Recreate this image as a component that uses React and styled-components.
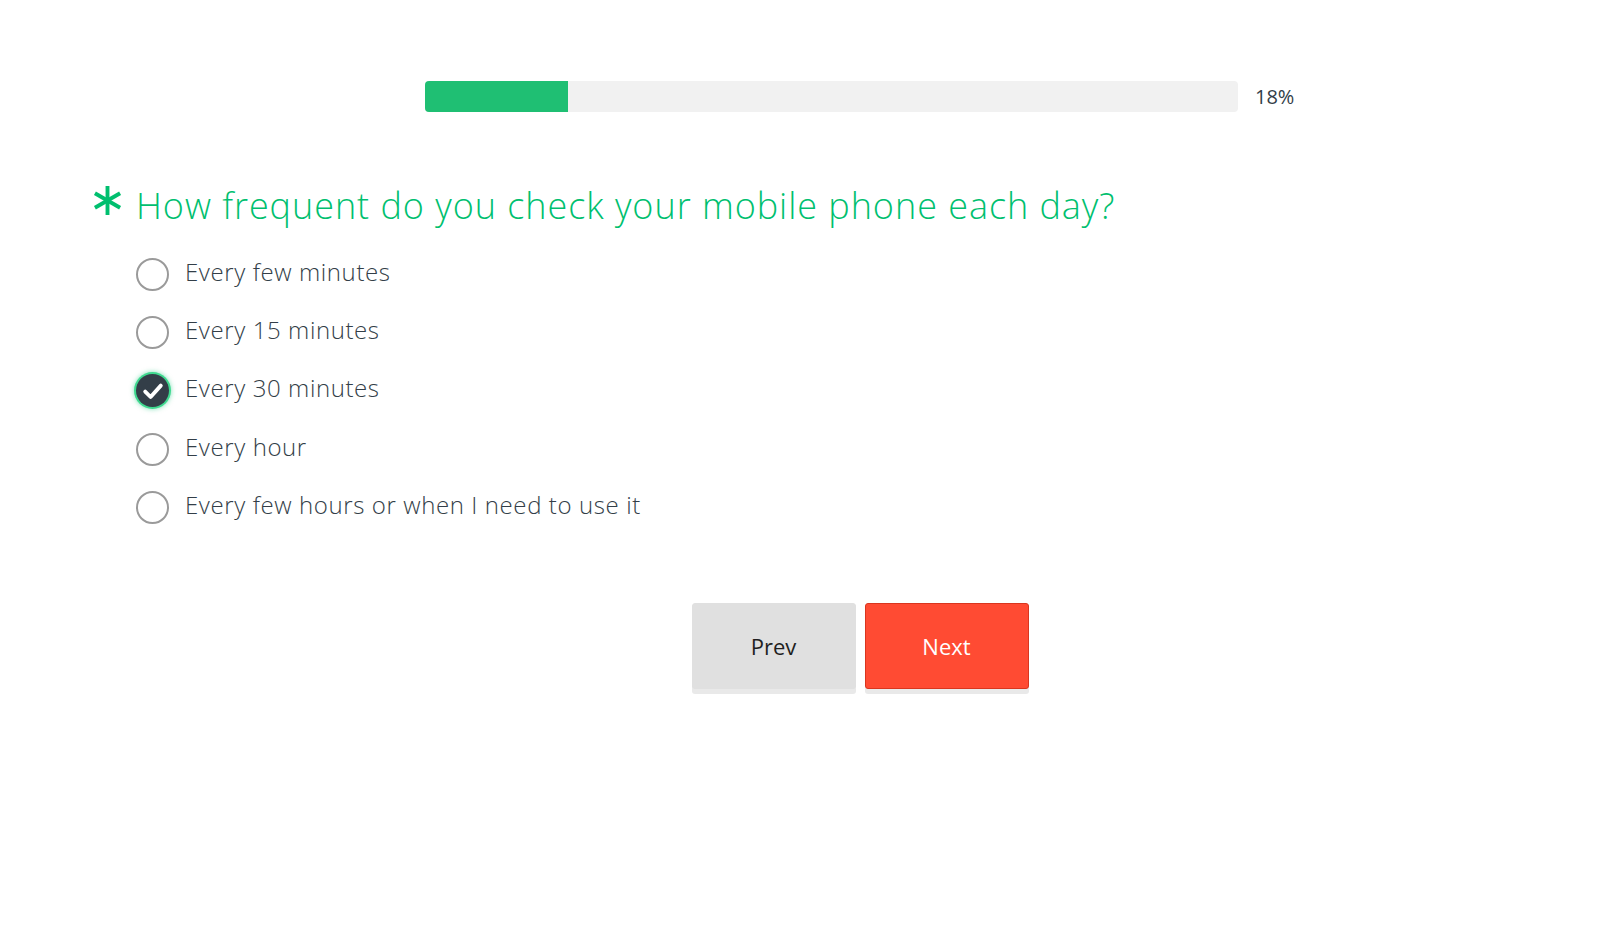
import React from "react";
import styled, { createGlobalStyle } from "styled-components";

const GlobalStyle = createGlobalStyle`
  body {
    margin: 0;
    background: #fff;
    font-family: "Open Sans", "Liberation Sans", sans-serif;
    color: #333e48;
  }
`;

const Page = styled.div`
  width: 1600px;
  min-height: 926px;
  padding-top: 81px;
  box-sizing: border-box;
`;

const Centered = styled.div`
  display: flex;
  justify-content: center;
  padding-left: 120px;
`;

const ProgressRow = styled(Centered)`
  align-items: center;
  gap: 17px;
`;

const Track = styled.div`
  width: 813px;
  height: 31px;
  background: #f1f1f1;
  border-radius: 4px;
  overflow: hidden;
`;

const Fill = styled.div`
  height: 100%;
  background: #1fbf73;
`;

const Percent = styled.span`
  font-size: 20px;
  color: #333e48;
  width: 40px;
`;

const Question = styled.div`
  display: flex;
  align-items: center;
  gap: 13px;
  padding-left: 92px;
  margin-top: 70px;
  height: 48px;
`;

const Asterisk = styled.svg`
  width: 31px;
  height: 31px;
  margin-top: -12px;
  flex-shrink: 0;
`;

const QuestionText = styled.h2`
  margin: 0;
  font-size: 36px;
  font-weight: 300;
  letter-spacing: 0.95px;
  line-height: 48px;
  color: #00bf6f;
`;

const Options = styled.div`
  display: flex;
  flex-direction: column;
  padding-left: 136px;
  margin-top: 15px;
`;

const Option = styled.label`
  display: flex;
  align-items: center;
  gap: 16px;
  height: 58.4px;
  cursor: pointer;
`;

const Radio = styled.span`
  width: 33px;
  height: 33px;
  box-sizing: border-box;
  border-radius: 50%;
  border: ${(p) => (p.$checked ? "none" : "2px solid #9a9a9a")};
  background: ${(p) => (p.$checked ? "#333e48" : "#fff")};
  box-shadow: ${(p) => (p.$checked ? "0 0 0 2px #3fd98f, 0 0 5px 2px rgba(0,191,111,0.5)" : "none")};
  display: flex;
  align-items: center;
  justify-content: center;
  flex-shrink: 0;
`;

const OptionText = styled.span`
  font-size: 24px;
  font-weight: 300;
  letter-spacing: 0.6px;
  margin-bottom: 6px;
  color: #333e48;
`;

const Buttons = styled(Centered)`
  gap: 9px;
  margin-top: 66px;
`;

const Button = styled.button`
  width: 164px;
  height: 86px;
  border-radius: 3px;
  font-family: "Open Sans", "Liberation Sans", sans-serif;
  font-size: 22px;
  cursor: pointer;
  background: ${(p) => (p.$primary ? "#ff4b33" : "#e0e0e0")};
  color: ${(p) => (p.$primary ? "#fff" : "#1f1f1f")};
  border: 1px solid ${(p) => (p.$primary ? "#d9361f" : "#e0e0e0")};
  box-shadow: 0 5px 0 #e9e9e9;
`;

const options = [
  "Every few minutes",
  "Every 15 minutes",
  "Every 30 minutes",
  "Every hour",
  "Every few hours or when I need to use it",
];

export default function App() {
  const [selected, setSelected] = React.useState(2);
  const progress = 17.6;

  return (
    <Page>
      <GlobalStyle />
      <ProgressRow>
        <Track>
          <Fill style={{ width: `${progress}%` }} />
        </Track>
        <Percent>18%</Percent>
      </ProgressRow>

      <Question>
        <Asterisk viewBox="0 0 32 32">
          <g stroke="#00bf6f" strokeWidth="4" strokeLinecap="butt">
            <line x1="16" y1="1" x2="16" y2="31" />
            <line x1="3" y1="8.5" x2="29" y2="23.5" />
            <line x1="3" y1="23.5" x2="29" y2="8.5" />
          </g>
        </Asterisk>
        <QuestionText>How frequent do you check your mobile phone each day?</QuestionText>
      </Question>

      <Options>
        {options.map((o, i) => (
          <Option key={o} onClick={() => setSelected(i)}>
            <Radio $checked={selected === i}>
              {selected === i && (
                <svg width="24" height="24" viewBox="0 0 20 20">
                  <path d="M3.5 10.5 L8 15 L16.5 5.5" fill="none" stroke="#fff" strokeWidth="3.2" strokeLinecap="round" strokeLinejoin="round" />
                </svg>
              )}
            </Radio>
            <OptionText>{o}</OptionText>
          </Option>
        ))}
      </Options>

      <Buttons>
        <Button>Prev</Button>
        <Button $primary>Next</Button>
      </Buttons>
    </Page>
  );
}
